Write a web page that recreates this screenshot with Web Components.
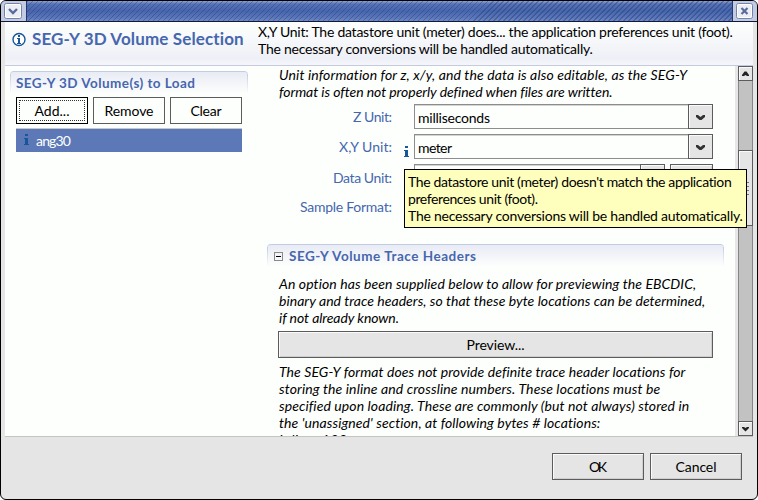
<!DOCTYPE html>
<html lang="en"><head><meta charset="utf-8"><title>SEG-Y 3D Volume Selection</title>
<style>
html,body{margin:0;height:100%;overflow:hidden;background:#fff}
body{font:14px/17px Lato,"Liberation Sans",sans-serif;color:#000}
</style></head><body>
<import-dialog></import-dialog>
<script>
const define=(name,html,setup)=>customElements.define(name,class extends HTMLElement{
 constructor(){super();this.attachShadow({mode:"open"}).innerHTML=html;}
 connectedCallback(){if(setup)setup.call(this,this.shadowRoot);}
});

/* One line of text, tracked so that it fills the width in its "w" attribute. */
define("text-line",`<style>:host{display:block;white-space:pre;height:17px;line-height:17px}span{display:inline-block}</style><span><slot></slot></span>`,
 function(root){
  const s=root.querySelector("span"),w=+this.getAttribute("w");
  this.style.width=w+"px";
  const n=this.textContent.length;
  s.style.letterSpacing=((w-s.getBoundingClientRect().width)/(n-1))+"px";
 });

define("title-bar",`<style>
:host{display:flex;height:20px;border-bottom:1px solid #111a3a;background:#4765ac}
.end{box-sizing:border-box;width:25px;height:20px;padding:2px 3px;background:#c3cbe2}
.end:last-child{width:24px}
.end svg{display:block}
.grip{flex:1;border:solid #22386f;border-width:0 1px;background:repeating-linear-gradient(135deg,#20386f66 0 1px,transparent 1px 3.54px),linear-gradient(#8ea3d4 0,#5873b6 15%,#4765ad 50%,#5c78bb 85%,#7089c4)}
</style>
<div class="end"><svg width="18" height="16"><rect x=".5" y=".5" width="17" height="15" rx="2" fill="#eceef6" stroke="#7383b0"/><rect x="1.5" y="1.5" width="15" height="13" rx="1" fill="none" stroke="#fff"/><path d="M5 6l4 4 4-4" fill="none" stroke="#5a6b9b" stroke-width="2.4"/></svg></div>
<div class="grip"></div>
<div class="end"><svg width="18" height="16"><rect x=".5" y=".5" width="16" height="15" rx="2" fill="#eceef6" stroke="#7383b0"/><rect x="1.5" y="1.5" width="14" height="13" rx="1" fill="none" stroke="#fff"/><path d="M5.5 5l6 6m0-6l-6 6" stroke="#5a6b9b" stroke-width="2.2"/></svg></div>`);

define("push-button",`<style>
:host{display:flex;box-sizing:border-box;height:27px;justify-content:center;align-items:flex-start;padding-top:4px;border:1px solid #5c5c5c;background:#e5e5e5;box-shadow:inset 1px 1px #fafafa,inset -1px -1px #cfcfcf;outline-offset:-4px}
:host([flat]){background:#fdfffd;box-shadow:none;width:72px}
:host([focused]){border-color:#000;outline:1px dotted #333}
</style><slot></slot>`);

define("section-head",`<style>
:host{display:flex;box-sizing:border-box;height:23px;padding:3px 0 0 6px;border-top:1px solid #c3cce4;border-radius:4px 4px 0 0;background:linear-gradient(#e9ebf5,#fdfffd) ;color:#4666ae;font-weight:700;font-size:13.5px;position:relative}
:host::before,:host::after{content:"";position:absolute;top:2px;bottom:0;width:1px;background:linear-gradient(#c3cce4,#fdfffd)}
:host::before{left:0}:host::after{right:0}
</style><slot></slot>`);

define("info-mark",`<style>:host{display:block;width:6px;height:11px}svg{display:block}</style>
<svg width="6" height="11"><path d="M1 0h3v2H1zM0 4h4v6h1v1H0v-1h1V5H0z" fill="#17569a"/></svg>`);

define("combo-box",`<style>
:host{display:flex;box-sizing:border-box;width:299px;height:25px}
.field{flex:1;box-sizing:border-box;border:1px solid #8d8d8d;border-right:0;padding:4px 0 0 3px;background:#fdfffd;box-shadow:inset 0 1px #d4d4d4}
.drop{box-sizing:border-box;width:25px;border:1px solid #5c5c5c;background:#e5e5e5;box-shadow:inset 1px 1px #fafafa}
</style><div class="field"><slot></slot></div><div class="drop"><svg width="23" height="23"><path d="M7 10h2l2.500 2 2.500-2h2v2l-3.500 3h-2l-3.500-3z" fill="#333"/></svg></div>`);

define("form-row",`<style>
:host{display:flex;height:30px;color:#4666ae}
.label{box-sizing:border-box;width:125px;display:flex;justify-content:flex-end;padding-top:var(--drop,4px)}
.mark{box-sizing:border-box;width:22px;padding:12px 0 0 12px}.body{color:#000;display:flex;gap:5px}
</style><div class="label"><slot name="label"></slot></div><div class="mark"><slot name="mark"></slot></div><div class="body"><slot></slot></div>`);

define("scroll-bar",`<style>
:host{display:flex;flex-direction:column;box-sizing:border-box;width:18px;border-left:3px solid #e9e6e9}
.b,.thumb{box-sizing:border-box;border:1px solid #5c5c5c;background:#e5e5e5;box-shadow:inset 1px 1px #fafafa;height:15px}
.t{box-sizing:border-box;border:solid #858585;border-width:0 1px;background:#c2c2c2;height:69px}.t.end{flex:1}
.thumb{height:76px;display:flex;flex-direction:column;align-items:center;justify-content:center;gap:3px}
.thumb i{width:7px;height:1px;background:#777}svg{display:block}
</style><div class="b"><svg width="13" height="13"><path d="M3 9V8l2.500-3.500h2L10 8v1H8L6.500 8 5 9z" fill="#222"/></svg></div><div class="t"></div><div class="thumb"><i></i><i></i><i></i><i></i></div><div class="t end"></div><div class="b"><svg width="13" height="13"><path d="M3 5h2l1.5 1L8 5h2v1L6.5 9.5 3 6z" fill="#222"/></svg></div>`);

define("page-header",`<style>
:host{display:flex;box-sizing:border-box;height:44px;border-bottom:1px solid #c5cae0;background:linear-gradient(#fdfffd,#eef0f7 85%,#f5f6fa)}
.icon{width:27px;padding:10px 0 0 7px;box-sizing:border-box}.name{width:226px;padding-top:8px;color:#4666ae;font-weight:700;font-size:17px}.msg{padding-top:1px}
</style><div class="icon"><svg width="15" height="15"><circle cx="7" cy="7.5" r="6" fill="#fff" stroke="#17569a" stroke-width="1.4"/><path d="M6 3h2v2h-2zM5 6h3v5h1v1h-4v-1h1V7h-1z" fill="#17569a"/></svg></div>
<div class="name"><slot name="name"></slot></div><div class="msg"><slot></slot></div>`);

define("volume-panel",`<style>
:host{display:block;box-sizing:border-box;width:262px;padding:5px 19px 0 5px}
.buttons{display:flex;gap:5px;padding:3px 6px 0}
.row{display:flex;margin:4px 6px 0;box-sizing:border-box;height:24px;border-top:1px solid #c8c8c8;background:#5d78b7;color:#fdfffd;padding:3px 0 0 8px;gap:6px}
.row info-mark{margin-top:2px}
</style><section-head><text-line w="179">SEG-Y 3D Volume(s) to Load</text-line></section-head>
<div class="buttons"><push-button flat focused><text-line w="35">Add...</text-line></push-button><push-button flat><text-line w="49">Remove</text-line></push-button><push-button flat><text-line w="31">Clear</text-line></push-button></div>
<div class="row"><info-mark></info-mark><text-line w="35">ang30</text-line></div>`);

define("detail-panel",`<style>
:host{display:block;width:468px;overflow:hidden}
.note{font-style:italic;padding-left:12px}
.form{padding-top:4px;height:136px;box-sizing:border-box;margin-bottom:8px}
section-head{width:457px;padding-left:7px}
.minus{box-sizing:border-box;width:9px;height:9px;border:1px solid #8a8a8a;margin:4px 6px 0 0;padding:3px 1px}
.minus::before{content:"";display:block;height:1px;background:#000}
.gap{padding-top:8px}.press{padding:5px 0 5px 11px}.press push-button{width:435px}
push-button.small{width:43px;height:25px}
</style>
<div class="note"><text-line w="408">Unit information for z, x/y, and the data is also editable, as the SEG-Y</text-line><text-line w="332">format is often not properly defined when files are written.</text-line></div>
<div class="form">
<form-row><text-line slot="label" w="39">Z Unit:</text-line><combo-box><text-line w="72">milliseconds</text-line></combo-box></form-row>
<form-row><text-line slot="label" w="53">X,Y Unit:</text-line><info-mark slot="mark"></info-mark><combo-box><text-line w="34">meter</text-line></combo-box></form-row>
<form-row style="--drop:5px"><text-line slot="label" w="59">Data Unit:</text-line><combo-box style="width:251px"></combo-box><push-button class="small"></push-button></form-row>
<form-row><text-line slot="label" w="92">Sample Format:</text-line></form-row>
</div>
<section-head><span class="minus"></span><text-line w="187">SEG-Y Volume Trace Headers</text-line></section-head>
<div class="note gap"><text-line w="417">An option has been supplied below to allow for previewing the EBCDIC,</text-line><text-line w="426">binary and trace headers, so that these byte locations can be determined,</text-line><text-line w="120">if not already known.</text-line></div>
<div class="press"><push-button><text-line w="58">Preview...</text-line></push-button></div>
<div class="note"><text-line w="406">The SEG-Y format does not provide definite trace header locations for</text-line><text-line w="381">storing the inline and crossline numbers. These locations must be</text-line><text-line w="410">specified upon loading. These are commonly (but not always) stored in</text-line><text-line w="321">the 'unassigned' section, at following bytes # locations:</text-line><text-line w="68">Inline: 189</text-line></div>`);

define("tool-tip",`<style>:host{display:block;box-sizing:border-box;width:343px;height:59px;border:1px solid #000;background:#ffffbd;padding:3px 0 0 3px;position:absolute;left:404px;top:169px}</style><slot></slot>`);

define("import-dialog",`<style>
:host{display:block;box-sizing:border-box;width:758px;height:500px;border:1px solid #000;border-radius:6px;overflow:hidden;background:#e5e5e5}
.inner{margin:0 4px 0 4px}.main{display:flex;height:370px;background:#fdfffd;border-bottom:1px solid #c4c4c4}
.actions{display:flex;justify-content:flex-end;gap:6px;padding:16px 11px 0 0}.actions push-button{width:92px}
</style><title-bar></title-bar>
<div class="inner"><page-header><text-line slot="name" w="212">SEG-Y 3D Volume Selection</text-line><text-line w="475">X,Y Unit: The datastore unit (meter) does... the application preferences unit (foot).</text-line><text-line w="335">The necessary conversions will be handled automatically.</text-line></page-header>
<div class="main"><volume-panel></volume-panel><detail-panel></detail-panel><scroll-bar></scroll-bar></div>
<div class="actions"><push-button><text-line w="18">OK</text-line></push-button><push-button><text-line w="41">Cancel</text-line></push-button></div></div>
<tool-tip><text-line w="324">The datastore unit (meter) doesn't match the application</text-line><text-line w="130">preferences unit (foot).</text-line><text-line w="335">The necessary conversions will be handled automatically.</text-line></tool-tip>`);
</script></body></html>
